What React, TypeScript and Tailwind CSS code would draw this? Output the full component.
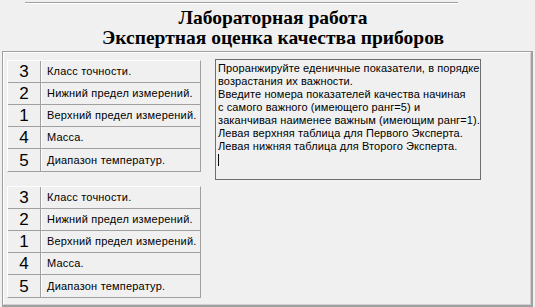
import React from 'react'

const rows = [
  { n: '3', label: 'Класс точности.' },
  { n: '2', label: 'Нижний предел измерений.' },
  { n: '1', label: 'Верхний предел измерений.' },
  { n: '4', label: 'Масса.' },
  { n: '5', label: 'Диапазон температур.' },
]

const lines = [
  'Проранжируйте еденичные показатели, в порядке',
  'возрастания их важности.',
  'Введите номера показателей качества начиная',
  'с самого важного (имеющего ранг=5) и',
  'заканчивая наименее важным (имеющим ранг=1).',
  'Левая верхняя таблица для Первого Эксперта.',
  'Левая нижняя таблица для Второго Эксперта.',
]

const RankGrid = () => (
  <div className="w-[194px] border border-t-white border-l-white border-r-[#a0a0a0] border-b-[#a0a0a0] flex flex-col">
    {rows.map((r, i) => (
      <div
        key={i}
        className={`flex h-[22px] ${i < rows.length - 1 ? 'border-b border-b-[#a0a0a0]' : ''}`}
      >
        <div className="w-[33px] border-r border-r-[#a0a0a0] flex items-center justify-center text-[17px] leading-none text-black">
          {r.n}
        </div>
        <div className="flex-1 border-l border-l-white flex items-center pl-[5px] text-[11px] tracking-[0.2px] whitespace-nowrap text-black">
          {r.label}
        </div>
      </div>
    ))}
  </div>
)

const App = () => {
  return (
    <div
      className="w-[535px] h-[307px] bg-[#f0f0f0] overflow-hidden"
      style={{ fontFamily: '"Liberation Sans", Arial, sans-serif' }}
    >
      <div className="pt-[2px] pl-[25px]">
        <div className="w-[433px] border-t border-t-[#a0a0a0] border-b border-b-white"></div>
      </div>
      <div
        className="w-[546px] text-center font-bold text-[19.5px] leading-[20px] text-black pt-[4px]"
        style={{ fontFamily: '"Liberation Serif", "Times New Roman", serif' }}
      >
        <div>Лабораторная работа</div>
        <div>Экспертная оценка качества приборов</div>
      </div>
      <div className="ml-[2px] mt-[3px] w-[531px] h-[256px] border border-[#a0a0a0] border-b-2 border-r-2">
        <div className="h-full border border-t-white border-l-white border-r-[#d0d0d0] border-b-[#d0d0d0] flex pl-[3px] pt-[6px] gap-[14px]">
          <div className="flex flex-col gap-[14px] pt-[1px]">
            <RankGrid />
            <RankGrid />
          </div>
          <div className="w-[266px] h-[121px] border border-[#6d6d6d] pl-[2px] pt-[2px] text-[11px] tracking-[0.1px] leading-[13px] whitespace-nowrap overflow-hidden text-black">
            {lines.map((l, i) => (
              <div key={i}>{l}</div>
            ))}
            <div className="w-[1px] h-[12px] bg-black mt-[1px]"></div>
          </div>
        </div>
      </div>
    </div>
  )
}

export default App
